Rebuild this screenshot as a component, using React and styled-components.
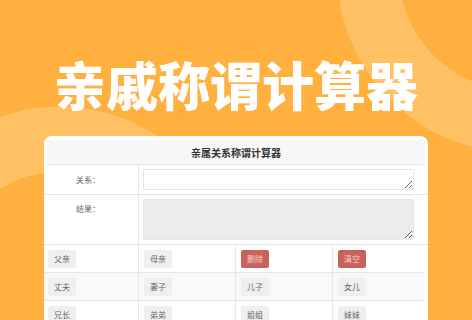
import React from "react";
import styled, { createGlobalStyle } from "styled-components";

const Global = createGlobalStyle`
  html, body { margin: 0; padding: 0; }
  body {
    width: 472px;
    height: 320px;
    overflow: hidden;
    font-family: "Noto Sans CJK SC", "Noto Sans", sans-serif;
  }
`;

const Page = styled.div`
  width: 472px;
  height: 320px;
  overflow: hidden;
  background:
    radial-gradient(circle at 520px -30px, transparent 121px, #ffc164 121.8px, #ffc164 183px, transparent 183.8px),
    radial-gradient(circle at 60px 282px, transparent 110px, #ffc164 110.8px, #ffc164 175px, transparent 175.8px),
    #ffb03f;
  display: flex;
  flex-direction: column;
  align-items: center;
`;

const Title = styled.h1`
  margin: 47px 0 16px;
  font-size: 52px;
  line-height: 73px;
  font-weight: 900;
  color: #ffffff;
  letter-spacing: 0;
  white-space: nowrap;
`;

const Card = styled.div`
  width: 384px;
  flex-shrink: 0;
  background: #ffffff;
  border-radius: 8px 8px 0 0;
  padding-top: 4px;
  box-sizing: border-box;
`;

const Header = styled.div`
  margin: 0 3px;
  height: 24px;
  border-bottom: 1px solid #e6e6e6;
  background: #f7f7f7;
  display: flex;
  align-items: center;
  justify-content: center;
  font-size: 10px;
  font-weight: 700;
  color: #333;
`;

const FormRow = styled.div`
  display: grid;
  grid-template-columns: 95px 1fr;
  border-bottom: 1px solid #e6e6e6;
`;

const Label = styled.div`
  border-right: 1px solid #e6e6e6;
  font-size: 8px;
  color: #666;
  text-align: right;
  padding-right: 38px;
  display: flex;
  justify-content: flex-end;
  align-items: ${(p) => (p.$top ? "flex-start" : "center")};
  padding-top: ${(p) => (p.$top ? "8px" : "0")};
`;

const Field = styled.div`
  padding: 4px 14px 4px 4px;
  display: flex;
`;

const Area = styled.textarea`
  flex: 1;
  box-sizing: border-box;
  height: ${(p) => p.$h}px;
  margin: 0;
  border: 1px solid #e6e6e6;
  border-radius: 2px;
  background: ${(p) => (p.disabled ? "#ececec" : "#ffffff")};
  font-family: inherit;
  font-size: 8px;
  outline: none;
  padding: 2px 4px;
`;

const Grid = styled.div`
  margin-right: 4px;
`;

const GridRow = styled.div`
  display: grid;
  grid-template-columns: 95px 97px 97px 1fr;
  height: 28px;
  box-sizing: border-box;
  border-bottom: 1px solid #e6e6e6;
  background: ${(p) => (p.$alt ? "#f8f8f8" : "#ffffff")};
`;

const Cell = styled.div`
  display: flex;
  align-items: center;
  padding-left: 4px;
  border-right: ${(p) => (p.$last ? "none" : "1px solid #e6e6e6")};
`;

const Btn = styled.button`
  height: 18px;
  padding: 0 6px;
  border: none;
  border-radius: 2px;
  margin-left: ${(p) => (p.$first ? "0" : "1px")};
  background: ${(p) => (p.$danger ? "#c8625a" : "#efefef")};
  color: ${(p) => (p.$danger ? "#f6d2ce" : "#666")};
  font-family: inherit;
  font-size: 8px;
  line-height: 18px;
  cursor: pointer;
`;

const rows = [
  [["父亲"], ["母亲"], ["删除", true], ["清空", true]],
  [["丈夫"], ["妻子"], ["儿子"], ["女儿"]],
  [["兄长"], ["弟弟"], ["姐姐"], ["妹妹"]],
];

export default function App() {
  return (
    <>
      <Global />
      <Page>
        <Title>亲戚称谓计算器</Title>
        <Card>
          <Header>亲属关系称谓计算器</Header>
          <FormRow>
            <Label>关系：</Label>
            <Field>
              <Area $h={21} />
            </Field>
          </FormRow>
          <FormRow>
            <Label $top>结果：</Label>
            <Field>
              <Area $h={41} disabled />
            </Field>
          </FormRow>
          <Grid>
            {rows.map((r, i) => (
              <GridRow key={i} $alt={i % 2 === 1}>
                {r.map(([t, d], j) => (
                  <Cell key={j} $last={j === 3}>
                    <Btn $danger={d} $first={j === 0}>{t}</Btn>
                  </Cell>
                ))}
              </GridRow>
            ))}
          </Grid>
        </Card>
      </Page>
    </>
  );
}
